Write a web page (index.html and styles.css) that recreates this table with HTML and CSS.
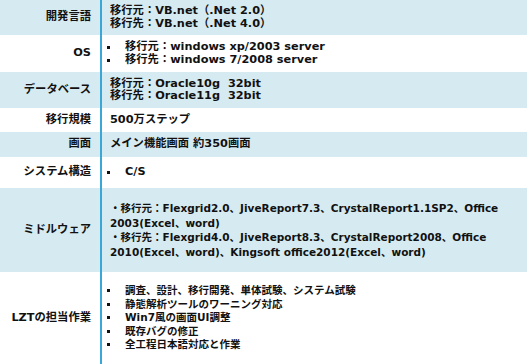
FILE: index.html
```html
<!DOCTYPE html>
<html lang="ja">
<head>
    <meta charset="UTF-8">
    <title>移行概要</title>
    <link rel="stylesheet" href="styles.css">
</head>
<body>
    <table class="spec">
        <tr class="row-1 shaded">
            <th>開発言語</th>
            <td>移行元：VB.net（.Net 2.0）<br>移行先：VB.net（.Net 4.0）</td>
        </tr>
        <tr class="row-2">
            <th>OS</th>
            <td>
                <ul class="dots">
                    <li>移行元：windows xp/2003 server</li>
                    <li>移行先：windows 7/2008 server</li>
                </ul>
            </td>
        </tr>
        <tr class="row-3 shaded">
            <th>データベース</th>
            <td>移行元：Oracle10g&nbsp;&nbsp;32bit<br>移行先：Oracle11g&nbsp;&nbsp;32bit</td>
        </tr>
        <tr class="row-4">
            <th>移行規模</th>
            <td>500万ステップ</td>
        </tr>
        <tr class="row-5 shaded">
            <th>画面</th>
            <td>メイン機能画面 約350画面</td>
        </tr>
        <tr class="row-6">
            <th>システム構造</th>
            <td>
                <ul class="dots">
                    <li>C/S</li>
                </ul>
            </td>
        </tr>
        <tr class="row-7 shaded">
            <th>ミドルウェア</th>
            <td class="small">
                <p class="para">・移行元：Flexgrid2.0、JiveReport7.3、CrystalReport1.1SP2、Office 2003(Excel、word)</p>
                <p class="para">・移行先：Flexgrid4.0、JiveReport8.3、CrystalReport2008、Office 2010(Excel、word)、Kingsoft office2012(Excel、word)</p>
            </td>
        </tr>
        <tr class="row-8">
            <th>LZTの担当作業</th>
            <td class="small">
                <ul class="dots tight">
                    <li>調査、設計、移行開発、単体試験、システム試験</li>
                    <li>静態解析ツールのワーニング対応</li>
                    <li>Win7風の画面UI調整</li>
                    <li>既存バグの修正</li>
                    <li>全工程日本語対応と作業</li>
                </ul>
            </td>
        </tr>
    </table>
</body>
</html>
```

FILE: styles.css
```css
:root {
    --shade: #d6ebf1;
    --rule: #3aa7d6;
    --text: #111111;
}

* {
    margin: 0;
    padding: 0;
    box-sizing: border-box;
}

body {
    background: #ffffff;
    color: var(--text);
    font-family: "DejaVu Sans", "Noto Sans CJK JP", sans-serif;
    font-weight: 700;
    font-size: 11.3px;
    line-height: 12.5px;
}

.spec {
    width: 527px;
    border-collapse: separate;
    border-spacing: 0;
    table-layout: fixed;
}

.spec th,
.spec td {
    vertical-align: middle;
}

.spec th {
    width: 102px;
    padding-right: 9px;
    text-align: right;
    font-weight: 700;
    border-right: 2px solid var(--rule);
}

.spec td {
    padding-left: 8px;
    padding-right: 4px;
}

.spec td.small {
    font-size: 10.5px;
}

.shaded {
    background: var(--shade);
}

.row-1 { height: 35px; }
.row-2 { height: 37px; }
.row-3 { height: 36px; }
.row-4 { height: 24px; }
.row-5 { height: 25px; }
.row-6 { height: 31px; }
.row-7 { height: 84px; }
.row-8 { height: 92px; }

.dots {
    list-style: none;
}

.dots li {
    position: relative;
    padding-left: 15px;
}

.dots li:before {
    content: '';
    position: absolute;
    left: -3px;
    top: 5px;
    width: 3px;
    height: 3px;
    background: var(--text);
}

.tight li {
    line-height: 13.5px;
}

.para {
    line-height: 14.5px;
}
```
